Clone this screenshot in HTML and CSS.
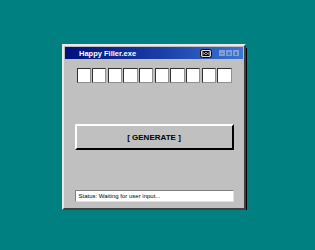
FILE: index.html
```html
<!DOCTYPE html>
<html>
<head>
    <title>Happy Filler.exe</title>
    <link rel="stylesheet" href="styles.css">
</head>
<body>
    <div class="window">
        <div class="titlebar">
            <span class="title">Happy Filler.exe</span>
            <svg class="tray-icon" width="12" height="9" viewBox="0 0 12 9">
                <rect x="0.5" y="0.5" width="11" height="8" rx="2" fill="#d8d8d8" stroke="#000"/>
                <rect x="3" y="2.5" width="6" height="4" fill="none" stroke="#000"/>
                <path d="M3.5 3 L8.5 6 M8.5 3 L3.5 6" stroke="#000" stroke-width="1"/>
            </svg>
            <div class="controls">
                <span class="ctl">&#8211;</span>
                <span class="ctl">o</span>
                <span class="ctl">x</span>
            </div>
        </div>
        <div class="content">
            <div class="slots">
                <div class="slot"></div>
                <div class="slot"></div>
                <div class="slot"></div>
                <div class="slot"></div>
                <div class="slot"></div>
                <div class="slot"></div>
                <div class="slot"></div>
                <div class="slot"></div>
                <div class="slot"></div>
                <div class="slot"></div>
            </div>
            <button class="generate" type="button">[ GENERATE ]</button>
            <div class="status">Status: Waiting for user input...</div>
        </div>
    </div>
</body>
</html>
```

FILE: styles.css
```css
body {
    margin: 0;
    background-color: #008080;
    font-family: "Liberation Sans", Arial, sans-serif;
}

.window {
    box-sizing: border-box;
    width: 184px;
    margin: 44px 0 0 62px;
    background-color: #c0c0c0;
    border: 2px solid;
    border-color: #e8e8e8 #404040 #404040 #e8e8e8;
    box-shadow: 1px 4px 0 #000;
    padding: 1px;
}

.titlebar {
    display: flex;
    align-items: center;
    height: 12px;
    padding: 0 4px 0 14px;
    background: linear-gradient(to right, #00107a, #1a3fa8 55%, #3a76d6);
}

.title {
    color: #fff;
    font-weight: bold;
    font-size: 7.5px;
    flex: 1;
}

.tray-icon {
    display: block;
    margin-right: 7px;
}

.controls {
    display: flex;
    gap: 1px;
}

.ctl {
    width: 6px;
    height: 6px;
    background-color: #7ea2d8;
    color: #2a4f99;
    font-size: 5px;
    line-height: 6px;
    text-align: center;
    font-weight: bold;
}

.content {
    display: flex;
    flex-direction: column;
    align-items: center;
    padding: 9px 0 5px 0;
}

.slots {
    display: flex;
    gap: 1.5px;
    width: 155px;
}

.slot {
    flex: 1;
    height: 15px;
    background-color: #fff;
    border: 1px solid;
    border-color: #303030 #909090 #909090 #303030;
    box-sizing: border-box;
}

.generate {
    margin-top: 41px;
    width: 159px;
    height: 26px;
    box-sizing: border-box;
    background-color: #c0c0c0;
    border: 2px solid;
    border-color: #fff #000 #000 #fff;
    font-family: "Liberation Sans", Arial, sans-serif;
    font-weight: bold;
    font-size: 8px;
    color: #000;
    padding: 0;
}

.status {
    margin-top: 40px;
    width: 159px;
    height: 12px;
    box-sizing: border-box;
    background-color: #fff;
    border: 1px solid;
    border-color: #808080 #e0e0e0 #e0e0e0 #808080;
    font-size: 6px;
    line-height: 10px;
    padding-left: 3px;
    color: #000;
}
```
